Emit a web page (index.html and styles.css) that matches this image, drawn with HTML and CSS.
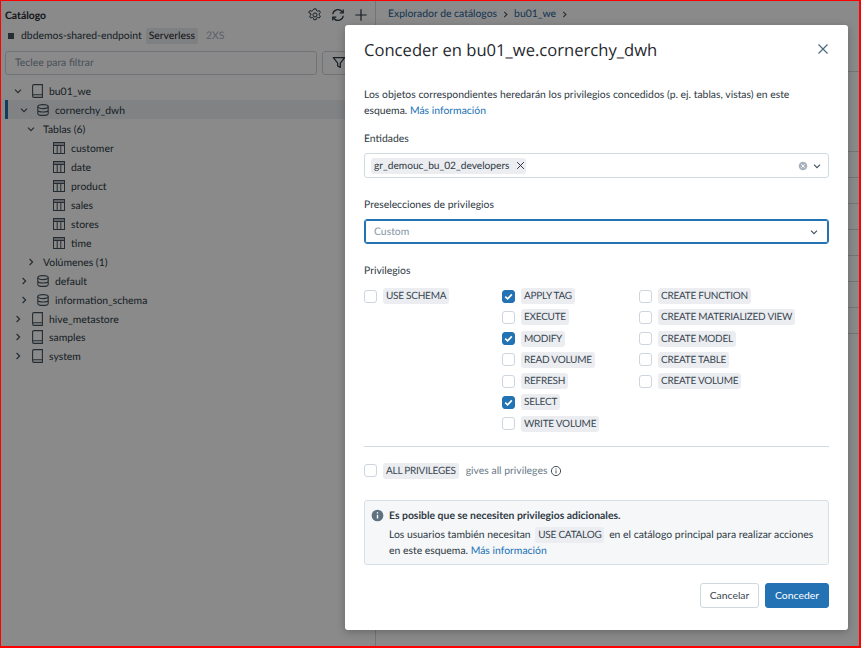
FILE: index.html
```html
<!DOCTYPE html>
<html lang="es">
<head>
<meta charset="utf-8">
<title>Conceder en bu01_we.cornerchy_dwh</title>
<link rel="stylesheet" href="styles.css">
</head>
<body>
<svg class="defs" width="0" height="0" aria-hidden="true">
  <symbol id="i-book" viewBox="0 0 11 14"><path d="M.6 11.6V1.9C.6 1.1 1.1.6 1.9.6h8.500v12.800H1.9C1.1 13.400.6 12.800.6 12.100s.5-1.300 1.300-1.300h8.500" fill="none" stroke="currentColor" stroke-width="1.100"/></symbol>
  <symbol id="i-db" viewBox="0 0 12 12"><g fill="none" stroke="currentColor" stroke-width="1.100"><ellipse cx="6" cy="2.600" rx="5.200" ry="2"/><path d="M.8 2.600v6.800c0 1.100 2.300 2 5.200 2s5.200-.9 5.200-2V2.600M.8 6c0 1.100 2.300 2 5.200 2s5.200-.9 5.200-2"/></g></symbol>
  <symbol id="i-table" viewBox="0 0 12 12"><g fill="none" stroke="currentColor" stroke-width="1"><rect x=".5" y=".5" width="11" height="11"/><path d="M.5 3.500h11M4.200 3.500v8M7.800 3.500v8"/></g><rect x=".5" y=".5" width="11" height="3" fill="currentColor" opacity=".4"/></symbol>
  <symbol id="i-down" viewBox="0 0 10 10"><path d="M2 3.600 5 6.600l3-3" fill="none" stroke="currentColor" stroke-width="1.200"/></symbol>
  <symbol id="i-right" viewBox="0 0 10 10"><path d="M3.600 2l3 3-3 3" fill="none" stroke="currentColor" stroke-width="1.200"/></symbol>
  <symbol id="i-x" viewBox="0 0 12 12"><path d="M1.500 1.500l9 9M10.500 1.500l-9 9" fill="none" stroke="currentColor" stroke-width="1.200"/></symbol>
  <symbol id="i-check" viewBox="0 0 12 12"><path d="M2.400 6.200 5 8.600l4.600-5" fill="none" stroke="#fff" stroke-width="1.900"/></symbol>
</svg>
<div class="frame">
  <aside class="sidebar">
    <div class="cat-head">
      <strong class="cat-title">Catálogo</strong>
      <div class="cat-tools">
        <svg class="tool" viewBox="0 0 16 16"><g fill="none" stroke="currentColor" stroke-width="1.100"><path d="M6.700 1h2.600l.4 1.900 1.300.7 1.900-.6 1.300 2.200-1.500 1.300v1.400l1.500 1.300-1.300 2.200-1.900-.6-1.300.7-.4 1.900H6.700l-.4-1.900-1.300-.7-1.900.6-1.300-2.200 1.500-1.300V6.500L.8 5.200 2.100 3l1.900.6 1.300-.7z" stroke-linejoin="round"/><circle cx="8" cy="7.900" r="2.300"/></g></svg>
        <svg class="tool" viewBox="0 0 16 16"><g fill="none" stroke="currentColor" stroke-width="1.400"><path d="M2 7.200A6 6 0 0 1 12.600 4l1 1.300M14 8.800A6 6 0 0 1 3.400 12l-1-1.300"/><path d="M14 1.600v4h-4M2 14.400v-4h4"/></g></svg>
        <svg class="tool" viewBox="0 0 16 16"><path d="M8 1.500v13M1.500 8h13" fill="none" stroke="currentColor" stroke-width="1.400"/></svg>
      </div>
    </div>
    <div class="endpoint">
      <span class="stop"></span>
      <span class="ep-name">dbdemos-shared-endpoint</span>
      <span class="ep-tag">Serverless</span>
      <span class="ep-size">2XS</span>
    </div>
    <div class="filter-row">
      <div class="filter-input">Teclee para filtrar</div>
      <div class="filter-btn"><svg class="funnel" viewBox="0 0 16 16"><path d="M1.500 2.500h13L9.500 8.600v5l-3-1.600V8.600z" fill="none" stroke="currentColor" stroke-width="1.400" stroke-linejoin="round"/></svg></div>
    </div>
    <ul class="tree">
      <li class="node l0"><svg class="chev"><use href="#i-down"/></svg><svg class="ico"><use href="#i-book"/></svg>bu01_we</li>
      <li class="node l1 selected"><svg class="chev"><use href="#i-down"/></svg><svg class="ico"><use href="#i-db"/></svg>cornerchy_dwh</li>
      <li class="node l2"><svg class="chev"><use href="#i-down"/></svg>Tablas (6)</li>
      <li class="node l3"><svg class="ico"><use href="#i-table"/></svg>customer</li>
      <li class="node l3"><svg class="ico"><use href="#i-table"/></svg>date</li>
      <li class="node l3"><svg class="ico"><use href="#i-table"/></svg>product</li>
      <li class="node l3"><svg class="ico"><use href="#i-table"/></svg>sales</li>
      <li class="node l3"><svg class="ico"><use href="#i-table"/></svg>stores</li>
      <li class="node l3"><svg class="ico"><use href="#i-table"/></svg>time</li>
      <li class="node l2"><svg class="chev"><use href="#i-right"/></svg>Volúmenes (1)</li>
      <li class="node l1"><svg class="chev"><use href="#i-right"/></svg><svg class="ico"><use href="#i-db"/></svg>default</li>
      <li class="node l1"><svg class="chev"><use href="#i-right"/></svg><svg class="ico"><use href="#i-db"/></svg>information_schema</li>
      <li class="node l0"><svg class="chev"><use href="#i-right"/></svg><svg class="ico"><use href="#i-book"/></svg>hive_metastore</li>
      <li class="node l0"><svg class="chev"><use href="#i-right"/></svg><svg class="ico"><use href="#i-book"/></svg>samples</li>
      <li class="node l0"><svg class="chev"><use href="#i-right"/></svg><svg class="ico"><use href="#i-book"/></svg>system</li>
    </ul>
  </aside>
  <main class="main">
    <nav class="crumbs">
      <span>Explorador de catálogos</span><svg class="crumb-sep"><use href="#i-right"/></svg>
      <span>bu01_we</span><svg class="crumb-sep"><use href="#i-right"/></svg>
    </nav>
    <div class="tabs-line"></div>
    <div class="rows">
      <div class="bg-row"></div><div class="bg-row"></div><div class="bg-row"></div><div class="bg-row"></div>
      <div class="bg-row"></div><div class="bg-row"></div><div class="bg-row"></div><div class="bg-row"></div>
    </div>
  </main>

  <div class="scrim"></div>

  <section class="dialog" role="dialog">
    <header class="dlg-head">
      <h1 class="dlg-title">Conceder en bu01_we.cornerchy_dwh</h1>
      <svg class="dlg-close"><use href="#i-x"/></svg>
    </header>
    <p class="dlg-desc">Los objetos correspondientes heredarán los privilegios concedidos (p. ej. tablas, vistas) en este esquema. <a class="link">Más información</a></p>

    <label class="field-label first">Entidades</label>
    <div class="select">
      <span class="chip">gr_demouc_bu_02_developers<svg class="chip-x"><use href="#i-x"/></svg></span>
      <span class="sel-right">
        <svg class="clear" viewBox="0 0 12 12"><circle cx="6" cy="6" r="5.200" fill="#a9b3bd"/><path d="M4 4l4 4M8 4l-4 4" stroke="#fff" stroke-width="1.100"/></svg>
        <svg class="sel-chev"><use href="#i-down"/></svg>
      </span>
    </div>

    <label class="field-label second">Preselecciones de privilegios</label>
    <div class="select focus">
      <span class="placeholder">Custom</span>
      <span class="sel-right"><svg class="sel-chev"><use href="#i-down"/></svg></span>
    </div>

    <label class="field-label third">Privilegios</label>
    <div class="priv-grid">
      <div class="priv-col c1">
        <div class="priv"><span class="cb"></span><span class="tag">USE SCHEMA</span></div>
      </div>
      <div class="priv-col c2">
        <div class="priv"><span class="cb on"><svg><use href="#i-check"/></svg></span><span class="tag">APPLY TAG</span></div>
        <div class="priv"><span class="cb"></span><span class="tag">EXECUTE</span></div>
        <div class="priv"><span class="cb on"><svg><use href="#i-check"/></svg></span><span class="tag">MODIFY</span></div>
        <div class="priv"><span class="cb"></span><span class="tag">READ VOLUME</span></div>
        <div class="priv"><span class="cb"></span><span class="tag">REFRESH</span></div>
        <div class="priv"><span class="cb on"><svg><use href="#i-check"/></svg></span><span class="tag">SELECT</span></div>
        <div class="priv"><span class="cb"></span><span class="tag">WRITE VOLUME</span></div>
      </div>
      <div class="priv-col c3">
        <div class="priv"><span class="cb"></span><span class="tag">CREATE FUNCTION</span></div>
        <div class="priv"><span class="cb"></span><span class="tag">CREATE MATERIALIZED VIEW</span></div>
        <div class="priv"><span class="cb"></span><span class="tag">CREATE MODEL</span></div>
        <div class="priv"><span class="cb"></span><span class="tag">CREATE TABLE</span></div>
        <div class="priv"><span class="cb"></span><span class="tag">CREATE VOLUME</span></div>
      </div>
    </div>
    <hr class="sep">
    <div class="priv all">
      <span class="cb"></span><span class="tag">ALL PRIVILEGES</span>
      <span class="all-note">gives all privileges</span>
      <svg class="note-i" viewBox="0 0 12 12"><circle cx="6" cy="6" r="4.600" fill="none" stroke="currentColor" stroke-width="1"/><path d="M6 5.400v3M6 3.400v1.100" stroke="currentColor" stroke-width="1"/></svg>
    </div>

    <div class="alert">
      <svg class="alert-i" viewBox="0 0 14 14"><circle cx="7" cy="7" r="6.300" fill="#5f7281"/><path d="M7 6.200v4M7 3.400v1.500" stroke="#fff" stroke-width="1.500"/></svg>
      <div class="alert-body">
        <div class="alert-title">Es posible que se necesiten privilegios adicionales.</div>
        <div class="alert-text">Los usuarios también necesitan <span class="tag inline">USE CATALOG</span> en el catálogo principal para realizar acciones en este esquema. <a class="link">Más información</a></div>
      </div>
    </div>

    <footer class="dlg-foot">
      <button class="btn">Cancelar</button>
      <button class="btn primary">Conceder</button>
    </footer>
  </section>
</div>
</body>
</html>
```
FILE: styles.css
```css
* { box-sizing: border-box; }
html, body { margin: 0; padding: 0; background: #fff; }
body { font-family: "Lato", "Open Sans", sans-serif; font-size: 10.4px; color: #1f272d; overflow: hidden; text-rendering: geometricPrecision; }
.defs { position: absolute; }
.frame { position: relative; width: 861px; height: 648px; border: solid #ff0000; border-width: 1px 2px 2px 1px; display: flex; overflow: hidden; background: #fff; }

/* sidebar */
.sidebar { width: 375px; flex: none; border-right: 1px solid #d1d9e1; padding: 0 0 0 4px; }
.cat-head { display: flex; align-items: center; justify-content: space-between; height: 27px; padding: 1px 7px 0 0; }
.cat-title { font-weight: 700; padding-top: 2px; }
.cat-tools { display: flex; gap: 9px; color: #2b3a45; }
.tool { width: 14px; height: 14px; }
.endpoint { display: flex; align-items: center; height: 16px; }
.stop { width: 6px; height: 6px; background: #445461; margin: 0 7px 0 3px; }
.ep-name { margin-right: 4px; color: #2b3a45; }
.ep-tag { background: #ebedf1; border-radius: 3px; padding: 0 3px; height: 16px; line-height: 16px; }
.ep-size { margin-left: 8px; color: #a9b3bd; }
.filter-row { display: flex; gap: 5px; margin-top: 7px; }
.filter-input { width: 312px; height: 24px; border: 1px solid #cfd7df; border-radius: 3px; padding-left: 9px; line-height: 22px; color: #8696a5; }
.filter-btn { width: 40px; height: 24px; border: 1px solid #cfd7df; border-radius: 3px; padding: 3px 0 0 9px; color: #2b3a45; }
.funnel { width: 14px; height: 15px; display: block; }

.tree { list-style: none; margin: 6px 0 0; padding: 0; }
.node { display: flex; align-items: center; height: 18.93px; padding-top: 4px; white-space: nowrap; color: #2b3a45; }
.node.selected { background: #eef1f4; border-left: 3px solid #1f6fae; }
.chev { width: 10px; height: 10px; flex: none; margin: 0 6px 2px 0; color: #45535f; }
.ico { flex: none; color: #45535f; }
.l0 { padding-left: 8px; }
.l0 .chev { margin-right: 9px; }
.l0 .ico { width: 11px; height: 14px; margin: 0 6px 2px 0; }
.l1 { padding-left: 14px; }
.l1 .chev { margin-right: 8px; }
.l1 .ico { width: 12px; height: 12px; margin: 0 6px 2px 0; }
.l1.selected { padding-left: 11px; }
.l2 { padding-left: 21px; }
.l2 .chev { margin-right: 7px; }
.l3 { padding-left: 48px; }
.l3 .ico { width: 12px; height: 12px; margin: 0 6px 2px 0; }

/* main behind */
.main { flex: 1; min-width: 0; }
.crumbs { display: flex; align-items: center; height: 26px; padding-left: 12px; color: #1f5f96; gap: 4px; }
.crumb-sep { width: 9px; height: 9px; color: #45535f; }
.tabs-line { height: 45px; border-bottom: 1px solid #d1d9e1; }
.rows { padding-top: 79px; }
.bg-row { height: 26px; border-top: 1px solid #d1d9e1; }

.scrim { position: absolute; inset: 0; background: rgba(0, 0, 0, .46); }

/* dialog */
.dialog { position: absolute; left: 344px; top: 24px; width: 503px; height: 605px; background: #fff; border-radius: 3px; padding: 0 19px; box-shadow: 0 2px 8px rgba(0,0,0,.25); }
.dlg-head { display: flex; align-items: center; justify-content: space-between; height: 48px; }
.dlg-title { margin: 0; font-family: "Open Sans", sans-serif; font-size: 16.6px; font-weight: 400; color: #1f272d; }
.dlg-close { width: 12px; height: 12px; color: #4a6a82; }
.dlg-desc { margin: 14px 0 0; line-height: 16px; color: #2f3a43; }
.link { color: #2272b4; }
.field-label { display: block; line-height: 16px; color: #2f3a43; }
.first { margin-top: 12px; }
.second { margin-top: 19px; }
.third { margin-top: 19px; }
.select { display: flex; align-items: center; justify-content: space-between; height: 25px; margin-top: 6px; border: 1px solid #d1d9e1; border-radius: 3px; padding: 0 6px; }
.select.focus { border: 1px solid #2272b4; box-shadow: 0 0 0 1px #2272b4 inset; padding: 0 9px; }
.chip { display: inline-flex; align-items: center; height: 16px; background: #ebedf1; border-radius: 3px; padding: 0 0 0 3px; font-size: 10.2px; color: #2f3a43; }
.chip-x { width: 9px; height: 9px; margin: 0 1px 0 6px; color: #1f272d; }
.sel-right { display: flex; align-items: center; gap: 4px; }
.clear { width: 10px; height: 10px; }
.sel-chev { width: 10px; height: 10px; color: #45535f; }
.placeholder { color: #8696a5; }

.priv-grid { display: grid; grid-template-columns: 138px 137px 1fr; margin-top: 9px; }
.priv-col { display: flex; flex-direction: column; gap: 5.3px; }
.priv { display: flex; align-items: center; height: 16px; }
.cb { display: block; width: 13px; height: 13px; border: 1px solid #cdd6de; border-radius: 3px; margin-right: 6px; flex: none; background: #fff; }
.cb.on { background: #2272b4; border-color: #2272b4; }
.cb svg { display: block; width: 11px; height: 11px; }
.tag { display: inline-block; background: #ebedf1; border-radius: 3px; padding: 0 3px; height: 16px; line-height: 16px; font-size: 10px; letter-spacing: -.25px; color: #3a4650; white-space: nowrap; }
.tag.inline { margin: 0 2px; }
.sep { border: 0; border-top: 1px solid #d1d9e1; margin: 14px 0 0; }
.all { margin-top: 16px; }
.all-note { margin-left: 7px; color: #6b7b88; }
.note-i { width: 12px; height: 12px; margin-left: 3px; color: #45535f; }
.alert { display: flex; margin-top: 21px; height: 65px; background: #f5f7f9; border: 1px solid #d7dfe6; border-radius: 3px; padding: 7px 6px; }
.alert-i { width: 13px; height: 13px; flex: none; margin-right: 5px; margin-top: 1px; }
.alert-body { line-height: 16px; color: #2f3a43; }
.alert-title { font-weight: 700; }
.alert-text { margin-top: 3px; }
.dlg-foot { display: flex; justify-content: flex-end; gap: 6px; margin-top: 18px; }
.btn { font: inherit; height: 25px; border: 1px solid #cfd7df; background: #fff; border-radius: 3px; width: 59px; padding: 0; color: #3a4650; }
.btn.primary { width: 64px; background: #2272b4; border-color: #2272b4; color: #fff; }
```
